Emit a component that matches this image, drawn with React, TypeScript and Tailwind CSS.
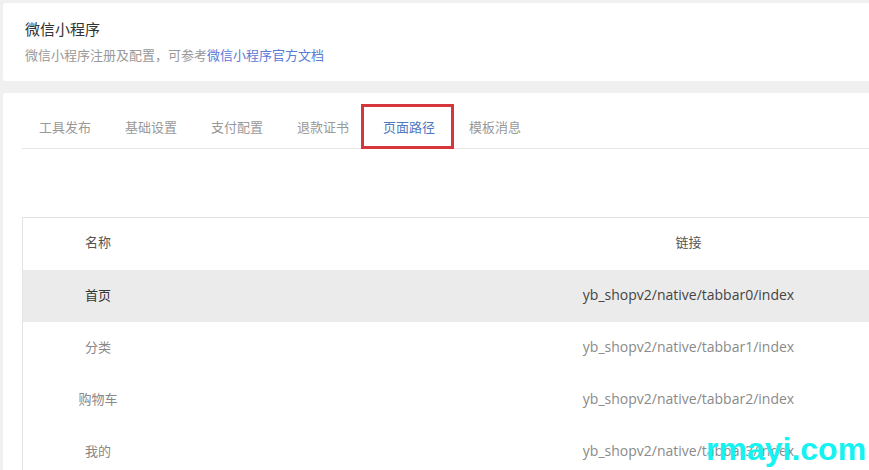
import React from "react";

const tabs = ["工具发布", "基础设置", "支付配置", "退款证书", "页面路径", "模板消息"];
const rows = [
  { name: "首页", link: "yb_shopv2/native/tabbar0/index" },
  { name: "分类", link: "yb_shopv2/native/tabbar1/index" },
  { name: "购物车", link: "yb_shopv2/native/tabbar2/index" },
  { name: "我的", link: "yb_shopv2/native/tabbar3/index" },
];

export default function App() {
  return (
    <div
      className="relative h-[470px] w-[869px] overflow-hidden bg-[#f0f0f0] pl-[3px] pt-[3px]"
      style={{ fontFamily: '"Noto Sans CJK SC", "Noto Sans", sans-serif' }}
    >
      <div className="h-[78px] w-[1200px] rounded-[3px] bg-white pl-[22px] pt-[15px]">
        <div className="text-[15px] leading-[22px] text-[#333]">微信小程序</div>
        <div className="mt-[6px] text-[13px] leading-[18px] text-[#999]">
          微信小程序注册及配置，可参考<span className="text-[#5a7bd6]">微信小程序官方文档</span>
        </div>
      </div>

      <div className="mt-[12px] h-[400px] w-[1200px] rounded-[3px] bg-white pl-[19px] pt-[12px]">
        <div className="flex h-[44px] items-center border-b border-[#e6e6e6]">
          {tabs.map((t) => (
            <div key={t} className="relative flex h-full w-[86px] items-center justify-center">
              <span
                className={
                  "text-[13px] leading-[18px] " +
                  (t === "页面路径" ? "text-[#4f7ac0]" : "text-[#999]")
                }
              >
                {t}
              </span>
              {t === "页面路径" && (
                <div className="absolute -left-[5px] -right-[2px] -top-[1px] bottom-[-1px] border-[3px] border-[#d4363c]" />
              )}
            </div>
          ))}
        </div>

        <div className="mt-[68px] w-[1182px] border-l border-t border-[#e3e3e3]">
          <div className="flex h-[52px] items-center pb-[4px] text-[13px] text-[#555]">
            <div className="w-[150px] text-center">名称</div>
            <div className="flex-1 text-center">链接</div>
          </div>
          {rows.map((r, i) => (
            <div
              key={r.name}
              className={
                "flex h-[52px] items-center pb-[3px] text-[13px] " +
                (i === 0 ? "bg-[#ebebeb] text-[#333]" : "text-[#888]")
              }
            >
              <div className="w-[150px] text-center">{r.name}</div>
              <div
                className={
                  "flex-1 text-center text-[14px] " + (i === 0 ? "text-[#444]" : "text-[#8a8a8a]")
                }
                style={{ fontFamily: '"Open Sans", "Noto Sans", sans-serif' }}
              >
                {r.link}
              </div>
            </div>
          ))}
        </div>
      </div>

      <div
        className="absolute left-[706px] top-[429px] text-[32px] font-black leading-[40px] text-[#14f2f2]"
        style={{ fontFamily: '"Liberation Sans", Arial, sans-serif' }}
      >
        rmayi.com
      </div>
    </div>
  );
}
